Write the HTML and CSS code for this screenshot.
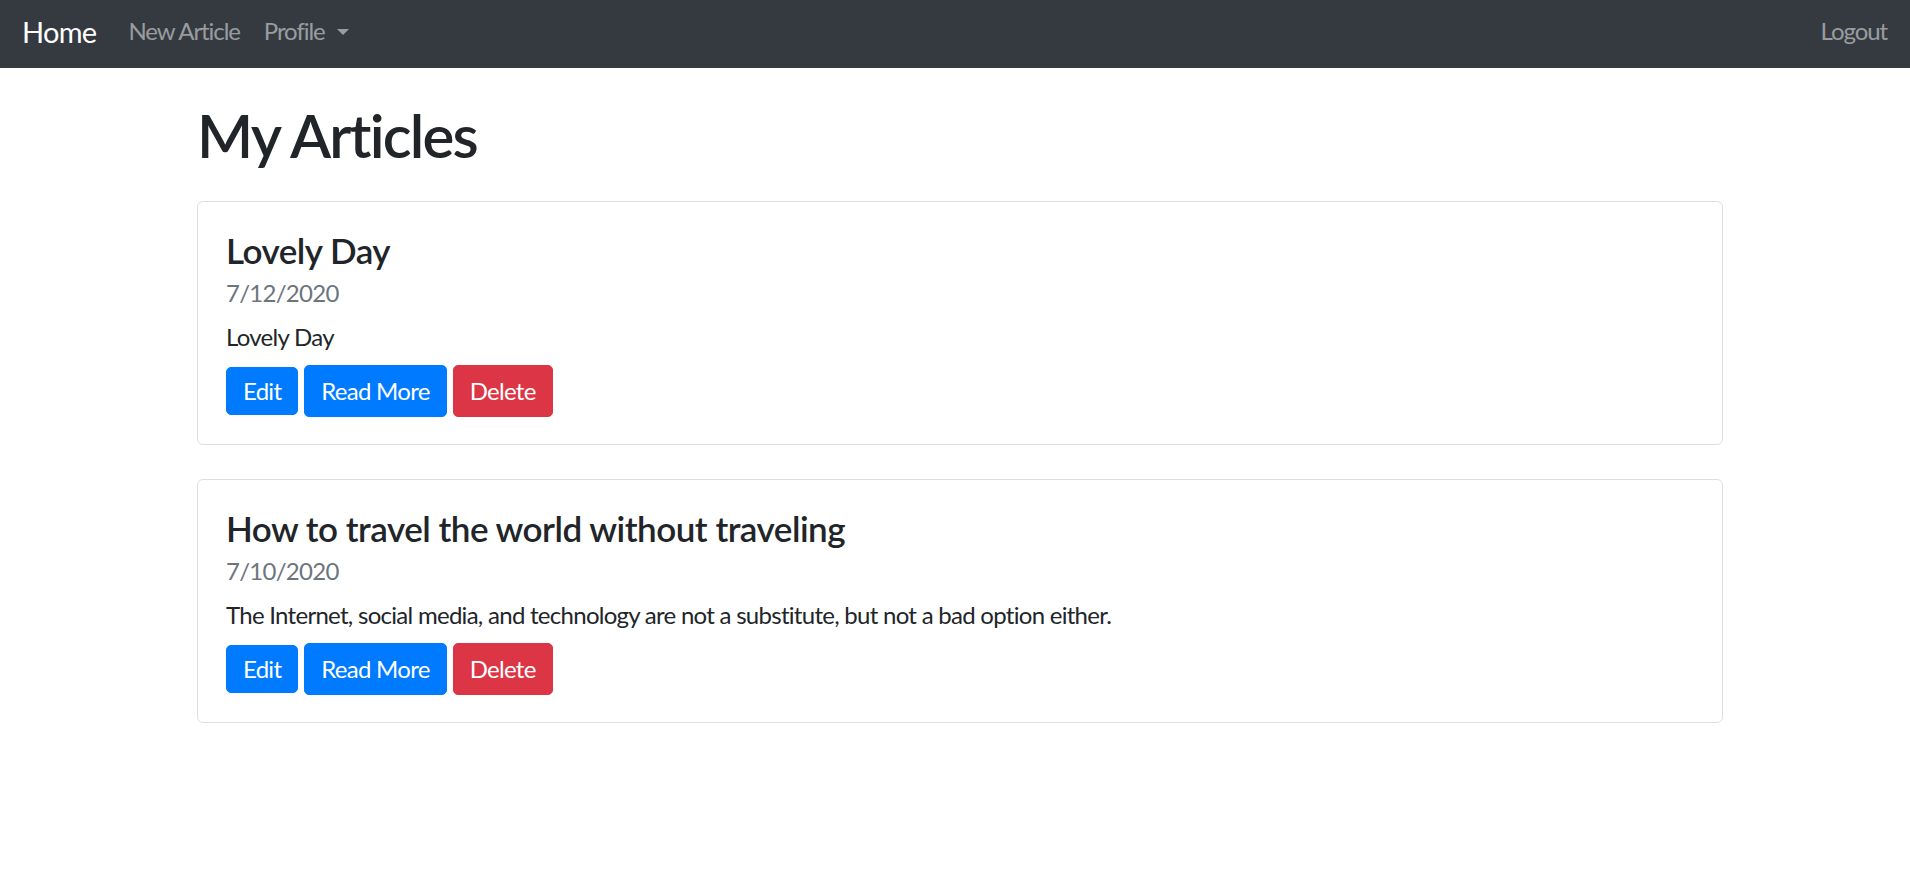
FILE: index.html
```html
<!DOCTYPE html>
<html lang="en">
<head>
<meta charset="utf-8">
<title>My Articles</title>
<link rel="stylesheet" href="styles.css">
</head>
<body>
<nav class="navbar">
  <a class="brand" href="#">Home</a>
  <ul class="nav-links">
    <li><a class="nav-link" href="#">New Article</a></li>
    <li><a class="nav-link dropdown-toggle" href="#">Profile<span class="caret"></span></a></li>
  </ul>
  <a class="nav-link logout" href="#">Logout</a>
</nav>
<main class="container">
  <h1 class="page-title">My Articles</h1>
  <div class="card">
    <h4 class="card-title">Lovely Day</h4>
    <div class="card-subtitle">7/12/2020</div>
    <p class="card-text">Lovely Day</p>
    <div class="actions">
      <a class="btn btn-primary btn-link" href="#">Edit</a>
      <button class="btn btn-primary">Read More</button>
      <button class="btn btn-danger">Delete</button>
    </div>
  </div>
  <div class="card">
    <h4 class="card-title">How to travel the world without traveling</h4>
    <div class="card-subtitle">7/10/2020</div>
    <p class="card-text">The Internet, social media, and technology are not a substitute, but not a bad option either.</p>
    <div class="actions">
      <a class="btn btn-primary btn-link" href="#">Edit</a>
      <button class="btn btn-primary">Read More</button>
      <button class="btn btn-danger">Delete</button>
    </div>
  </div>
</main>
</body>
</html>
```
FILE: styles.css
```css
* { box-sizing: border-box; }
html, body { margin: 0; padding: 0; }
body {
  font-family: Lato, "Open Sans", sans-serif;
  font-size: 24px;
  line-height: 1.5;
  letter-spacing: -0.03em;
  color: #212529;
  background: #fff;
}
a { text-decoration: none; }

.navbar {
  height: 68px;
  background: #343a40;
  display: flex;
  align-items: center;
  padding: 0 23px 6px 22px;
}
.brand {
  color: #fff;
  font-size: 29px;
  line-height: 1;
  margin-right: 20px;
}
.nav-links {
  list-style: none;
  margin: 0;
  padding: 0;
  display: flex;
  flex: 1;
}
.nav-link {
  color: rgba(255,255,255,.5);
  font-size: 24px;
  letter-spacing: -0.045em;
  padding: 0 12px;
  display: flex;
  align-items: center;
}
.caret {
  display: inline-block;
  width: 0;
  height: 0;
  margin-left: 12px;
  margin-top: 2px;
  border-top: 6px solid rgba(255,255,255,.5);
  border-left: 6px solid transparent;
  border-right: 6px solid transparent;
}
.logout { padding: 0; }

.container {
  width: 1526px;
  margin-left: 197px;
}
.page-title {
  font-size: 60px;
  font-weight: 600;
  line-height: 72px;
  letter-spacing: -0.03em;
  margin: 31px 0 30px;
}
.card {
  border: 1px solid #dfdfdf;
  border-radius: 6px;
  padding: 27px 28px 27px;
  margin-bottom: 34px;
}
.card-title {
  font-size: 35px;
  font-weight: 600;
  line-height: 42px;
  letter-spacing: -0.014em;
  margin: 0 0 4px;
}
.card-subtitle {
  color: #6c757d;
  line-height: 36px;
  margin-bottom: 8px;
}
.card-text {
  margin: 0 0 10px;
  line-height: 36px;
}
.actions {
  display: flex;
  align-items: center;
  gap: 6px;
}
.btn {
  font-family: inherit;
  font-size: 24px;
  letter-spacing: -0.03em;
  line-height: 36px;
  color: #fff;
  border: 1px solid transparent;
  border-radius: 5px;
  padding: 7px 16px;
  cursor: pointer;
}
.btn-link { padding: 5px 16px; }
.btn-primary { background: #007bff; border-color: #007bff; }
.btn-danger { background: #dc3545; border-color: #dc3545; }
```
